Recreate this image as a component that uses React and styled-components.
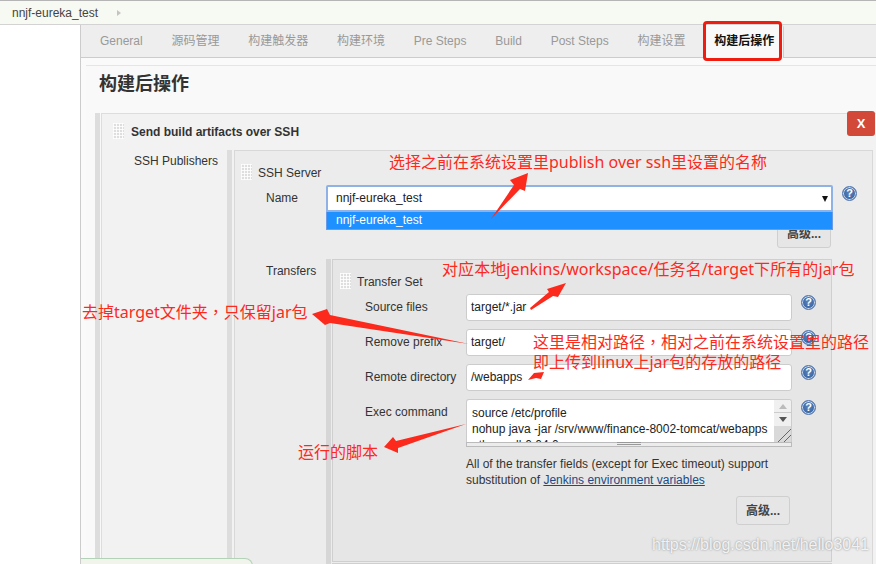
import React from "react";
import styled, { createGlobalStyle } from "styled-components";

const SANS = `"Liberation Sans", "Noto Sans CJK SC", sans-serif`;

const Global = createGlobalStyle`
  html, body { margin: 0; padding: 0; width: 876px; height: 564px; overflow: hidden; background: #fff; }
  * { box-sizing: border-box; }
  body { font: 12px/16px ${SANS}; color: #333; }
`;

const Page = styled.div`
  position: relative;
  width: 876px;
  height: 564px;
  overflow: hidden;
`;
const Breadcrumb = styled.div`
  height: 25px;
  display: flex;
  align-items: center;
  padding-left: 12px;
  background: #f7f9f3;
  border-top: 1px solid #b5b5b5;
  border-bottom: 1px solid #d3d3d3;
  color: #444;
`;
const Caret = styled.span`
  margin-left: 19px;
  width: 0;
  height: 0;
  border-left: 4px solid #c4c4c4;
  border-top: 3.5px solid transparent;
  border-bottom: 3.5px solid transparent;
`;
const Shell = styled.div`
  display: flex;
  height: 539px;
`;
const Sidebar = styled.aside`
  width: 80px;
  flex: none;
  background: #fff;
`;
const Main = styled.main`
  flex: 1;
  min-width: 0;
  border-left: 1px solid #ccc;
  background: #fafafa;
`;
const Tabs = styled.nav`
  display: flex;
  align-items: stretch;
  gap: 28.75px;
  height: 33px;
  padding-left: 19px;
  background: #eee;
  border-bottom: 1px solid #ccc;
`;
const Tab = styled.span`
  display: flex;
  align-items: center;
  color: ${p => (p.$active ? "#111" : "#999")};
  font-weight: ${p => (p.$active ? 700 : 400)};
  ${p => p.$active && `
    background: #f9f9f9;
    margin: 0 -9px -1px -9px;
    padding: 0 9px 1px;
    border-right: 1px solid #ccc;
    border-radius: 0 3px 0 0;
  `}
`;
const Section = styled.section`
  margin: 7px 0 0 5px;
  border-top: 1px solid #e5e5e5;
  background: #f9f9f9;
  height: 499px;
`;
const Heading = styled.h1`
  margin: 0;
  height: 47px;
  padding: 6px 0 0 13px;
  font-size: 18px;
  line-height: 24px;
  font-weight: 700;
  color: #333;
`;
const Block = styled.div`
  position: relative;
  margin-left: ${p => p.$indent || 0}px;
  border-left: 5px solid ${p => p.$bar};
  padding-left: ${p => p.$gap}px;
  flex: ${p => (p.$grow ? 1 : "none")};
`;
const Panel = styled.div`
  width: ${p => (p.$width ? `${p.$width}px` : "auto")};
  background: ${p => p.$bg};
  border: 1px solid ${p => p.$line};
  ${p => p.$open && "border-right: 0; border-bottom: 0;"}
  ${p => p.$height && `height: ${p.$height}px;`}
`;
const BlockHead = styled.div`
  display: flex;
  align-items: flex-start;
  height: ${p => p.$h || 34}px;
  padding: ${p => p.$top || 14}px 0 0 ${p => p.$left || 6}px;
`;
const Handle = styled.span`
  flex: none;
  width: 11px;
  height: 16px;
  margin: -1px ${p => p.$gap || 6}px 0 0;
  background-color: #dedede;
  background-image:
    linear-gradient(rgba(255,255,255,.85) 1px, transparent 1px),
    linear-gradient(90deg, rgba(255,255,255,.85) 1px, transparent 1px);
  background-size: 3px 3px;
`;
const BlockTitle = styled.span`
  font-weight: ${p => (p.$bold ? 700 : 400)};
  color: #333;
`;
const CloseButton = styled.button`
  position: absolute;
  right: 1px;
  top: -2px;
  width: 28px;
  height: 25px;
  padding: 0;
  border: 0;
  border-radius: 3px;
  background: #d24939;
  color: #fff;
  font: 700 13px/25px ${SANS};
`;
const Columns = styled.div`
  display: flex;
  align-items: flex-start;
  padding-right: ${p => p.$right || 0}px;
  margin-top: ${p => p.$top || 0}px;
`;
const SideLabel = styled.div`
  flex: none;
  width: ${p => p.$w}px;
  padding: ${p => p.$top}px 0 0 ${p => p.$left}px;
  color: #333;
`;
const NameRow = styled.div`
  display: flex;
  align-items: flex-start;
  height: 27px;
`;
const SelectBox = styled.div`
  position: relative;
  width: 507px;
  height: 27px;
  margin-right: 9px;
  padding: 3px 0 0 8px;
  background: #fff;
  border: 2px solid #8fb2e6;
  border-radius: 2px 2px 0 0;
  color: #222;
`;
const SelectArrow = styled.span`
  position: absolute;
  right: 3px;
  top: 9px;
  width: 0;
  height: 0;
  border-top: 6px solid #111;
  border-left: 3.5px solid transparent;
  border-right: 3.5px solid transparent;
`;
const DropList = styled.div`
  position: absolute;
  z-index: 2;
  left: -2px;
  right: -2px;
  top: 25px;
  height: 18px;
  padding: 0 0 0 9px;
  background: #1e90ff;
  border: 1px solid #6a9be8;
  border-top: 0;
  color: #fff;
`;
const Help = styled.span`
  flex: none;
  display: block;
  width: 15px;
  height: 15px;
  margin-top: 1px;
  border-radius: 50%;
  background: radial-gradient(circle at 50% 45%, #5d83bb 0, #3d6aa8 60%, #6f8fc0 100%);
  border: 1px solid #4f74ad;
  box-shadow: inset 0 0 0 1px #cfdcee;
  color: #fff;
  font: 700 11px/13px ${SANS};
  text-align: center;
`;
const ButtonRow = styled.div`
  display: flex;
  justify-content: flex-end;
  padding-right: ${p => p.$right}px;
  margin-top: ${p => p.$top}px;
`;
const AdvancedButton = styled.button`
  width: 54px;
  height: 29px;
  padding: 0;
  background: #e6e6e6;
  border: 1px solid #cfcfcf;
  border-radius: 3px;
  color: #444;
  font: 700 12px/16px ${SANS};
`;
const FieldRow = styled.div`
  display: flex;
  align-items: flex-start;
  margin-bottom: 8px;
`;
const FieldLabel = styled.label`
  flex: none;
  width: 133px;
  padding: 5px 0 0 32px;
  color: #333;
`;
const TextField = styled.div`
  flex: none;
  width: 326px;
  height: 27px;
  margin-right: 9px;
  padding: 4px 0 0 4px;
  background: #fff;
  border: 1px solid #ccc;
  border-radius: 3px;
  color: #222;
`;
const CodeWrap = styled.div`
  flex: none;
  width: 326px;
  margin-right: 9px;
`;
const CodeArea = styled.div`
  position: relative;
  height: 43px;
  overflow: hidden;
  padding: 5px 18px 0 5px;
  background: #fff;
  border: 1px solid #ccc;
  border-bottom: 0;
  border-radius: 3px 3px 0 0;
  white-space: nowrap;
  color: #222;
`;
const ScrollBar = styled.div`
  position: absolute;
  right: 0;
  top: 0;
  bottom: 0;
  width: 17px;
  display: flex;
  flex-direction: column;
  background: #f0f0f0;
`;
const ScrollButton = styled.div`
  height: 13px;
  display: flex;
  align-items: center;
  justify-content: center;
  ${p => p.$up && "border-bottom: 1px solid #ccc;"}
  &::after {
    content: "";
    width: 0;
    height: 0;
    border-left: 4.5px solid transparent;
    border-right: 4.5px solid transparent;
    ${p => (p.$up ? "border-bottom: 5px solid #bbb;" : "border-top: 5px solid #555;")}
  }
`;
const ScrollCorner = styled.div`
  margin-top: auto;
  height: 16px;
  background-color: #d9d9d9;
  background-image: linear-gradient(135deg, transparent 58%, #666 58% 63%, transparent 63% 76%, #666 76% 81%, transparent 81%);
`;
const Grip = styled.div`
  height: 5px;
  display: flex;
  justify-content: center;
  background: #ececec;
  border: 1px solid #bbb;
`;
const GripMark = styled.span`
  width: 24px;
  height: 3px;
  margin-top: -1px;
  border-top: 1px solid #999;
  border-bottom: 1px solid #999;
`;
const Note = styled.p`
  margin: 9px 0 0 133px;
  width: 340px;
  color: #333;
`;
const DocLink = styled.a`
  color: #204a87;
  text-decoration: underline;
`;
const NextSet = styled.div`
  margin-top: 1px;
  width: 500px;
  height: 8px;
  border-top: 1px solid #cfcfcf;
`;

const Overlay = styled.div`
  position: absolute;
  inset: 0;
  z-index: 5;
  pointer-events: none;
`;
const ArrowLayer = styled.svg`
  position: absolute;
  left: 0;
  top: 0;
`;
const RedFrame = styled.div`
  position: absolute;
  left: 703px;
  top: 21px;
  width: 79px;
  height: 40px;
  border: 3px solid #f01c10;
  border-radius: 4px;
`;
const Annotation = styled.span`
  position: absolute;
  left: ${p => p.$x}px;
  top: ${p => p.$y}px;
  font: 16px/20px "Noto Sans", "Noto Sans CJK SC", sans-serif;
  letter-spacing: ${p => p.$track || 0}px;
  color: #fb2a1c;
  white-space: nowrap;
`;
const Comma = styled.span`
  font-family: "Noto Sans CJK TC", sans-serif;
`;
const Watermark = styled.span`
  position: absolute;
  left: 652px;
  top: 535px;
  font: 16px/20px ${SANS};
  color: rgba(255,255,255,.85);
  text-shadow: 0 0 2px rgba(110,110,110,.8);
  white-space: nowrap;
`;
const FooterTab = styled.div`
  position: absolute;
  z-index: 4;
  left: 81px;
  top: 558px;
  width: 172px;
  height: 10px;
  background: #f0f4ea;
  border: 1px solid #b3d2b8;
  border-left: 0;
  border-radius: 0 8px 0 0;
`;

const TAB_NAMES = ["General", "源码管理", "构建触发器", "构建环境", "Pre Steps", "Build", "Post Steps", "构建设置"];

const ARROWS = [
  "491,219 514,185 510,180 528,173 525,191 520,189",
  "530,308 549,292 547,289 566,283 558,297 553,296 531,310",
  "469,344 330,323 325,325 312,314 327,309 330,315",
  "528,380 534,373 544,372 541,379 536,378",
  "466,424 398,448 398,453 384,447 393,437 396,441",
];

function Field({ label, value }) {
  return (
    <FieldRow>
      <FieldLabel>{label}</FieldLabel>
      <TextField>{value}</TextField>
      <Help>?</Help>
    </FieldRow>
  );
}

export default function App() {
  return (
    <Page>
      <Global />
      <Breadcrumb>nnjf-eureka_test<Caret /></Breadcrumb>
      <Shell>
        <Sidebar />
        <Main>
          <Tabs>
            {TAB_NAMES.map(t => <Tab key={t}>{t}</Tab>)}
            <Tab $active>构建后操作</Tab>
          </Tabs>
          <Section>
            <Heading>构建后操作</Heading>
            <Block $indent={9} $bar="#ddd" $gap={1}>
              <Panel $bg="#f2f2f2" $line="#ddd" $open $height={460}>
                <CloseButton>X</CloseButton>
                <BlockHead $h={36} $top={10} $left={11}>
                  <Handle $gap={7} />
                  <BlockTitle $bold>Send build artifacts over SSH</BlockTitle>
                </BlockHead>
                <Columns $right={3}>
                  <SideLabel $w={125} $top={3} $left={32}>SSH Publishers</SideLabel>
                  <Block $bar="#ddd" $gap={2} $grow>
                    <Panel $bg="#ececec" $line="#d8d8d8" $height={420}>
                      <BlockHead>
                        <Handle />
                        <BlockTitle>SSH Server</BlockTitle>
                      </BlockHead>
                      <NameRow>
                        <SideLabel $w={91} $top={5} $left={31}>Name</SideLabel>
                        <SelectBox>
                          nnjf-eureka_test
                          <SelectArrow />
                          <DropList>nnjf-eureka_test</DropList>
                        </SelectBox>
                        <Help>?</Help>
                      </NameRow>
                      <ButtonRow $right={41} $top={7}>
                        <AdvancedButton>高级...</AdvancedButton>
                      </ButtonRow>
                      <Columns $top={11}>
                        <SideLabel $w={91} $top={4} $left={31}>Transfers</SideLabel>
                        <Block $bar="#d6d6d6" $gap={1}>
                          <Panel $bg="#e6e6e6" $line="#cfcfcf" $height={303} $width={500}>
                            <BlockHead $left={7}>
                              <Handle />
                              <BlockTitle>Transfer Set</BlockTitle>
                            </BlockHead>
                            <Field label="Source files" value="target/*.jar" />
                            <Field label="Remove prefix" value="target/" />
                            <Field label="Remote directory" value="/webapps" />
                            <FieldRow>
                              <FieldLabel>Exec command</FieldLabel>
                              <CodeWrap>
                                <CodeArea>
                                  source /etc/profile<br />
                                  nohup java -jar /srv/www/finance-8002-tomcat/webapps<br />
                                  eth.eurall-0.04.0
                                  <ScrollBar>
                                    <ScrollButton $up />
                                    <ScrollButton />
                                    <ScrollCorner />
                                  </ScrollBar>
                                </CodeArea>
                                <Grip><GripMark /></Grip>
                              </CodeWrap>
                              <Help>?</Help>
                            </FieldRow>
                            <Note>
                              All of the transfer fields (except for Exec timeout) support substitution of{" "}
                              <DocLink href="#">Jenkins environment variables</DocLink>
                            </Note>
                            <ButtonRow $right={41} $top={8}>
                              <AdvancedButton>高级...</AdvancedButton>
                            </ButtonRow>
                          </Panel>
                          <NextSet />
                        </Block>
                      </Columns>
                    </Panel>
                  </Block>
                </Columns>
              </Panel>
            </Block>
          </Section>
        </Main>
      </Shell>
      <FooterTab />
      <Overlay>
        <RedFrame />
        <ArrowLayer width="876" height="564" viewBox="0 0 876 564">
          {ARROWS.map(p => <polygon key={p} points={p} fill="#fb2a1c" />)}
        </ArrowLayer>
        <Annotation $x={389} $y={152}>选择之前在系统设置里publish over ssh里设置的名称</Annotation>
        <Annotation $x={442} $y={259} $track={0.08}>对应本地jenkins/workspace/任务名/target下所有的jar包</Annotation>
        <Annotation $x={82} $y={301}>去掉target文件夹<Comma>，</Comma>只保留jar包</Annotation>
        <Annotation $x={533} $y={331}>这里是相对路径<Comma>，</Comma>相对之前在系统设置里的路径</Annotation>
        <Annotation $x={533} $y={352}>即上传到linux上jar包的存放的路径</Annotation>
        <Annotation $x={298} $y={442}>运行的脚本</Annotation>
        <Watermark>https://blog.csdn.net/hello3041</Watermark>
      </Overlay>
    </Page>
  );
}
